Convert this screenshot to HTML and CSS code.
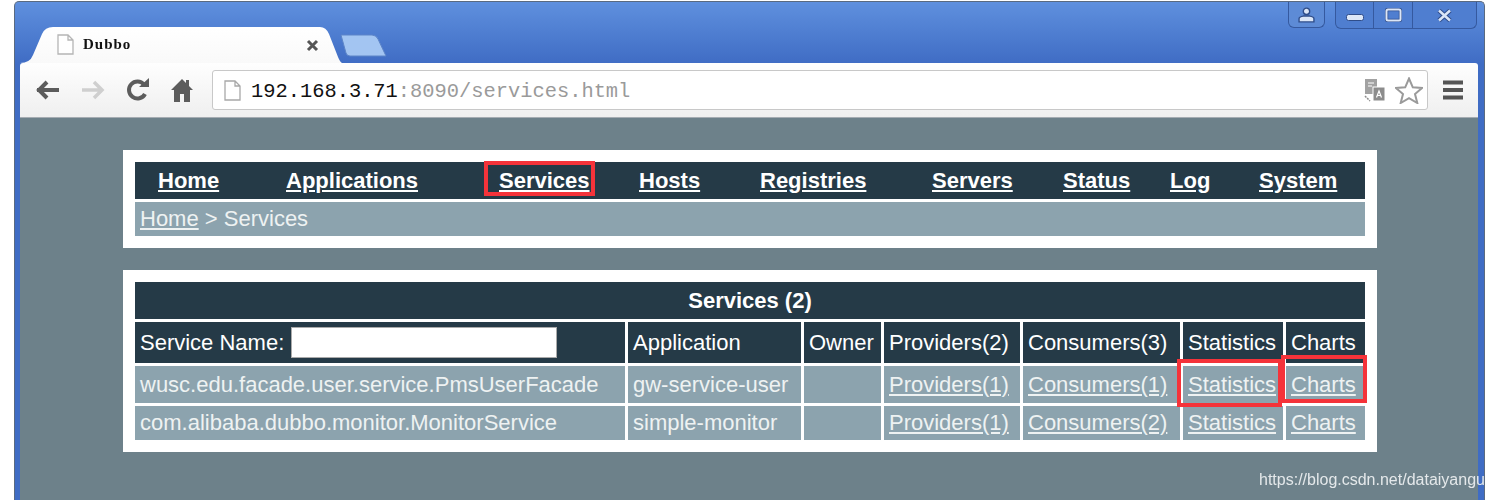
FILE: index.html
```html
<!DOCTYPE html>
<html lang="en">
<head>
<meta charset="utf-8">
<title>Dubbo</title>
<link rel="stylesheet" href="styles.css">
</head>
<body>
<div class="window">
  <div class="tabstrip">
    <div class="tab">
      <svg class="tab-shape" viewBox="0 0 322 36" preserveAspectRatio="none"><defs><linearGradient id="tg" x1="0" y1="0" x2="0" y2="1"><stop offset="0" stop-color="#ffffff"/><stop offset="1" stop-color="#f9f9f9"/></linearGradient></defs><path d="M0 36V36Q10 36 13 28L22 7Q25 0 33 0H300Q306 0 309 7L318 30Q320 35 322 36Z" fill="url(#tg)"/></svg>
      <svg class="page-icon tab-icon" viewBox="0 0 17 21"><path d="M1 1H11L16 6V20H1Z M11 1V6H16" fill="#fff" stroke="#b5b5b5" stroke-width="1.3"/></svg>
      <span class="tab-title">Dubbo</span>
      <svg class="tab-close" viewBox="0 0 13 13"><path d="M2 2L11 11M11 2L2 11" stroke="#555" stroke-width="3"/></svg>
    </div>
    <svg class="newtab" viewBox="0 0 47 23"><path d="M1 1H32Q36 1 38 5L46 22H10Q7 22 6 19Z" fill="#a3c5f2" stroke="#5d85c8"/></svg>
    <div class="controls">
      <div class="ctl ctl-user"><svg viewBox="0 0 16 15" width="17" height="16"><circle cx="8" cy="4" r="3" fill="#dbe6f7" stroke="#2f4d8a" stroke-width="1.300"/><path d="M1 14V11Q1 9 5 8.500H11Q15 9 15 11V14Z" fill="#dbe6f7" stroke="#2f4d8a" stroke-width="1.300"/></svg></div>
      <div class="ctl-group">
        <div class="ctl ctl-min"><svg viewBox="0 0 18 7" width="18" height="7"><rect x=".5" y=".5" width="17" height="6" rx="2" fill="#dbe6f7" stroke="#2f4d8a"/></svg></div>
        <div class="ctl ctl-max"><svg viewBox="0 0 17 14" width="17" height="14"><rect x="1.500" y="1.500" width="14" height="11" rx="1.500" fill="none" stroke="#2f4d8a" stroke-width="3.400"/><rect x="1.500" y="1.500" width="14" height="11" rx="1.500" fill="none" stroke="#dbe6f7" stroke-width="2"/></svg></div>
        <div class="ctl ctl-close"><svg viewBox="0 0 15 13" width="15" height="13"><path d="M2 1.500L13 11.500M13 1.500L2 11.500" stroke="#2f4d8a" stroke-width="4.500"/><path d="M2 1.500L13 11.500M13 1.500L2 11.500" stroke="#dbe6f7" stroke-width="2.500"/></svg></div>
      </div>
    </div>
  </div>
  <div class="toolbar">
    <svg class="tb-icon" viewBox="0 0 24 20"><path d="M1 10H23M11 2L3 10L11 18" fill="none" stroke="#5c5c5c" stroke-width="4"/></svg>
    <svg class="tb-icon" viewBox="0 0 24 20"><path d="M1 10H21M13 2L21 10L13 18" fill="none" stroke="#cfcfcf" stroke-width="3.500"/></svg>
    <svg class="tb-icon" viewBox="0 0 24 24"><path d="M19 16A8.500 8.500 0 1 1 18 6.500" fill="none" stroke="#5c5c5c" stroke-width="4"/><path d="M13 9H23V0Z" fill="#5c5c5c"/></svg>
    <svg class="tb-home" viewBox="0 0 22 24"><path d="M11 1L0 12H3V24H9V16H13V24H19V12H22L18 8V2H15V5Z" fill="#5c5c5c"/></svg>
    <div class="omnibox">
      <svg class="page-icon omni-icon" viewBox="0 0 17 21"><path d="M1 1H11L16 6V20H1Z M11 1V6H16" fill="#fff" stroke="#a8a8a8" stroke-width="1.300"/></svg>
      <span class="url"><span class="host">192.168.3.71</span>:8090/services.html</span>
      <svg class="translate" viewBox="0 0 21 23"><rect x="1" y="0" width="12" height="15" fill="#a2a2a2"/><rect x="9" y="8" width="12" height="14" fill="#8c8c8c" stroke="#fff"/><path d="M4 4H10M4 7H8" stroke="#fff"/><path d="M12.500 18.500L15 12L17.500 18.500M13.500 16.500H16.500" fill="none" stroke="#fff" stroke-width="1.200"/><path d="M1 17L6 22" stroke="#8c8c8c" stroke-width="1.500" stroke-dasharray="2 1"/></svg>
      <svg class="star" viewBox="0 0 28 27"><path d="M14 1.500L17.800 10.300L27 11L20 17L22.300 26L14 21.200L5.700 26L8 17L1 11L10.200 10.300Z" fill="#fff" stroke="#9a9a9a" stroke-width="2"/></svg>
    </div>
    <svg class="hamburger" viewBox="0 0 20 20"><path d="M0 2.500H20M0 10H20M0 17.500H20" stroke="#555" stroke-width="4"/></svg>
  </div>
  <div class="content">
    <div class="panel">
      <nav class="menu">
        <a href="#">Home</a><a href="#">Applications</a><a href="#" class="current">Services</a><a href="#">Hosts</a><a href="#">Registries</a><a href="#">Servers</a><a href="#">Status</a><a href="#">Log</a><a href="#">System</a>
      </nav>
      <div class="crumb"><a href="#">Home</a> &gt; Services</div>
    </div>
    <div class="panel panel-table">
      <div class="grid">
        <div class="cell title">Services (2)</div>
        <div class="cell head">Service Name:<input class="search" type="text"></div>
        <div class="cell head">Application</div>
        <div class="cell head">Owner</div>
        <div class="cell head">Providers(2)</div>
        <div class="cell head">Consumers(3)</div>
        <div class="cell head">Statistics</div>
        <div class="cell head">Charts</div>
        <div class="cell">wusc.edu.facade.user.service.PmsUserFacade</div>
        <div class="cell">gw-service-user</div>
        <div class="cell"></div>
        <div class="cell"><a href="#">Providers(1)</a></div>
        <div class="cell"><a href="#">Consumers(1)</a></div>
        <div class="cell"><a href="#">Statistics</a></div>
        <div class="cell"><a href="#">Charts</a></div>
        <div class="cell">com.alibaba.dubbo.monitor.MonitorService</div>
        <div class="cell">simple-monitor</div>
        <div class="cell"></div>
        <div class="cell"><a href="#">Providers(1)</a></div>
        <div class="cell"><a href="#">Consumers(2)</a></div>
        <div class="cell"><a href="#">Statistics</a></div>
        <div class="cell"><a href="#">Charts</a></div>
      </div>
    </div>
    <div class="mark mark-services"></div>
    <div class="mark mark-stats"></div>
    <div class="mark mark-charts"></div>
    <div class="watermark">https://blog.csdn.net/dataiyangu</div>
  </div>
</div>
</body>
</html>
```
FILE: styles.css
```css
* { box-sizing: border-box; }
html, body { margin: 0; height: 500px; overflow: hidden; background: #fff; }
body { padding: 1px 0 0 14px; font-family: "Liberation Sans", Arial, sans-serif; }
.window {
  width: 1471px; height: 499px;
  display: flex; flex-direction: column;
  padding: 0 6px 0 5px;
  border: 1px solid #5a6a80; border-bottom: 0;
  border-radius: 5px 5px 0 0;
  background: linear-gradient(#5f90de 0, #3f6cc4 62px);
  filter: blur(.6px);
}
.tabstrip { height: 61px; flex: none; display: flex; align-items: flex-end; }
.tab { position: relative; width: 322px; height: 36px; flex: none; display: flex; align-items: center; padding-left: 37px; }
.tab-shape { position: absolute; inset: 0; width: 322px; height: 36px; }
.tab-icon { position: relative; width: 17px; height: 21px; margin-top: -2px; }
.tab-title { position: relative; margin-left: 9px; width: 223px; margin-top: -2px; font: 700 15px "Liberation Serif", serif; letter-spacing: 1px; color: #111; }
.tab-close { position: relative; width: 13px; height: 13px; }
.newtab { width: 47px; height: 23px; margin: 0 0 6px -2px; flex: none; }
.controls { margin-left: auto; margin-right: 1px; align-self: flex-start; display: flex; gap: 10px; }
.ctl { height: 26px; display: flex; align-items: center; justify-content: center; }
.ctl-user { width: 37px; border: 1px solid #35599f; border-top: 0; border-radius: 0 0 6px 6px; background: #5d8bd6; }
.ctl-group { display: flex; width: 142px; border: 1px solid #35599f; border-top: 0; border-radius: 0 0 6px 6px; background: #4f7ed0; }
.ctl-min { width: 38px; border-right: 1px solid #35599f; padding-top: 4px; }
.ctl-max { width: 39px; border-right: 1px solid #35599f; }
.ctl-close { flex: 1; }
.toolbar {
  height: 55px; flex: none; display: flex; align-items: center; padding-left: 16px;
  background: linear-gradient(#fefefe, #efefef);
  border-bottom: 1px solid #a5acb2; border-radius: 3px 3px 0 0;
}
.tb-icon { width: 24px; height: 24px; margin-right: 21px; flex: none; }
.tb-home { width: 22px; height: 24px; flex: none; margin-right: 19px; }
.omnibox {
  width: 1216px; height: 40px; flex: none; display: flex; align-items: center;
  padding-left: 11px;
  background: #fff; border: 1px solid #c8c8c8; border-radius: 3px;
}
.omni-icon { width: 17px; height: 21px; flex: none; }
.url { margin: 3px 0 0 10px; font: 20.400px "Liberation Mono", monospace; color: #9a9a9a; width: 1113px; }
.host { color: #111; }
.translate { width: 21px; height: 23px; flex: none; }
.star { width: 28px; height: 27px; margin-left: 10px; flex: none; }
.hamburger { width: 20px; height: 20px; margin-left: 15px; flex: none; margin-top: -1px; }
.content { position: relative; flex: 1; padding: 32px 0 0 103px; background: #6d818a; }
.panel { width: 1254px; padding: 12px; background: #fff; }
.panel-table { margin-top: 22px; }
.menu {
  height: 37px; display: grid; align-items: center; padding-left: 23px;
  grid-template-columns: 128px 213px 140px 121px 172px 131px 107px 89px 1fr;
  background: #253a47;
}
.menu a { color: #fff; font-weight: 700; font-size: 22px; }
.crumb { height: 34px; margin-top: 3px; padding-left: 5px; line-height: 34px; font-size: 22px; color: #eef2f2; background: #8ca3ae; }
.crumb a, .cell a { color: #eef2f2; }
.grid {
  display: grid; gap: 3px;
  grid-template-columns: 490px 173px 77px 136px 157px 100px 79px;
  grid-template-rows: 37px 41px 37px 34px;
}
.cell { display: flex; align-items: center; padding-left: 5px; font-size: 22px; white-space: nowrap; color: #eef2f2; background: #8ca3ae; }
.title { grid-column: 1 / -1; justify-content: center; padding: 0; font-weight: 700; color: #fff; background: #253a47; }
.head { color: #fff; background: #253a47; }
.search { width: 266px; height: 31px; margin-left: 7px; border: 1px solid #aaa; background: #fff; padding: 0; }
.mark { position: absolute; border: 4px solid #f5333a; }
.mark-services { left: 464px; top: 43px; width: 111px; height: 35px; }
.mark-stats { left: 1157px; top: 241px; width: 105px; height: 48px; }
.mark-charts { left: 1261px; top: 237px; width: 86px; height: 48px; }
.watermark { position: absolute; left: 1239px; top: 353px; font-size: 16px; white-space: nowrap; color: #e4e8ea; }
```
